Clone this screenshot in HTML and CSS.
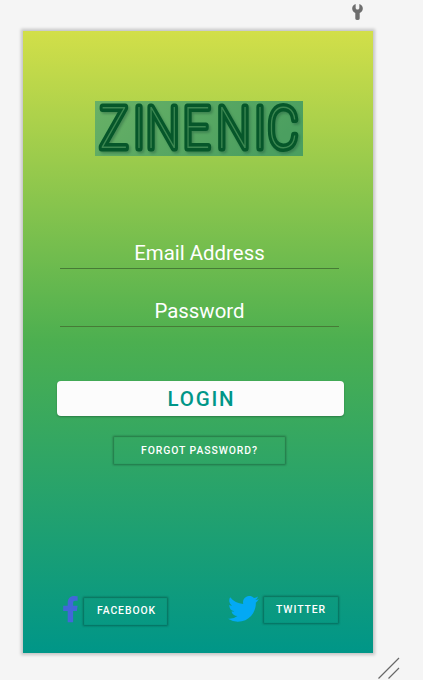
FILE: index.html
```html
<!DOCTYPE html>
<html lang="en">
<head>
<meta charset="utf-8">
<title>Zinenic</title>
<link rel="stylesheet" href="styles.css">
</head>
<body>
<header class="tools">
  <svg class="wrench" viewBox="0 0 12 18"><path d="M4 .3V5L5 6.3H7L8 5V.3C10.4 1 11.8 3 11.8 5.2C11.8 7.4 10.4 9.2 8.4 10V16Q8.4 17.7 6 17.7Q3.6 17.7 3.6 16V10C1.6 9.2.2 7.4.2 5.2C.2 3 1.6 1 4 .3Z"/></svg>
</header>
<main class="screen">
  <svg class="logo" viewBox="0 0 208 55">
    <defs><linearGradient id="panel" x2="1" y2=".3"><stop stop-color="#68b166"/><stop offset="1" stop-color="#4b9f60"/></linearGradient></defs>
    <rect width="208" height="55" fill="url(#panel)"/>
    <text class="letters" transform="scale(.84 1)" x="5.5 45 60.5 104.5 144.5 189 205.5" y="47">ZINENIC</text>
  </svg>
  <form class="login">
    <input class="field" type="text" placeholder="Email Address">
    <input class="field" type="password" placeholder="Password">
    <button class="submit" type="button">LOGIN</button>
    <button class="outline forgot" type="button">FORGOT PASSWORD?</button>
  </form>
  <footer class="social">
    <svg class="facebook-icon" viewBox="0 0 16 28"><path d="M5 28V16H.2V10.6H5V7.5C5 2.8 7.8.2 12 .2C13.4.2 15.6.5 15.6.5V5.3H13.2C11.3 5.3 10.8 6.2 10.8 7.6V10.6H15.6L14.8 16H10.8V28Z"/></svg>
    <button class="outline facebook" type="button">FACEBOOK</button>
    <svg class="twitter-icon" viewBox="0 0 24 20" preserveAspectRatio="none"><path d="M23.95 2.37a10 10 0 0 1-2.82.77A4.95 4.95 0 0 0 23.3.42a9.9 9.9 0 0 1-3.13 1.18 4.92 4.92 0 0 0-8.38 4.48A13.9 13.9 0 0 1 1.64.96a4.93 4.93 0 0 0 1.52 6.57 4.9 4.9 0 0 1-2.23-.61v.06a4.92 4.92 0 0 0 3.95 4.83 5 5 0 0 1-2.21.08 4.94 4.94 0 0 0 4.6 3.42A9.9 9.9 0 0 1 0 17.54a14 14 0 0 0 7.55 2.21c9.14 0 14.3-7.72 13.99-14.63a10 10 0 0 0 2.41-2.75Z"/></svg>
    <button class="outline twitter" type="button">TWITTER</button>
  </footer>
</main>
<svg class="grip" viewBox="0 0 22 22"><path d="M.5 21.5L21 1M10.5 21.5L21 11"/></svg>
</body>
</html>
```
FILE: styles.css
```css
* { box-sizing: border-box; }
body {
  margin: 0;
  height: 680px;
  overflow: hidden;
  background: #f5f5f5;
  font-family: Roboto, sans-serif;
}
.tools {
  height: 31px;
  padding: 3px 60px 0 0;
  display: flex;
  justify-content: flex-end;
}
.wrench { width: 11px; height: 18px; fill: #6e6e6e; }
.screen {
  width: 350px;
  height: 622px;
  margin-left: 23px;
  display: flex;
  flex-direction: column;
  background: linear-gradient(#d2df49, #4caf50 50%, #009688);
  box-shadow: 0 0 3px 2px #0003;
}
.logo {
  width: 208px;
  height: 55px;
  margin: 70px 0 0 72px;
  display: block;
  flex: none;
}
.letters {
  font: 100 57px Roboto, sans-serif;
  fill: #3d8751;
  stroke: #06572a;
  stroke-width: 6.6px;
  stroke-linejoin: round;
  vector-effect: non-scaling-stroke;
  paint-order: stroke;
  filter: drop-shadow(2px 2px 1px #1f553966);
}
.login {
  margin: 80px 29px 0 34px;
  display: flex;
  flex-direction: column;
}
.field {
  width: 279px;
  height: 33px;
  margin: 0 0 25px 3px;
  padding: 2px 0 0;
  border: 0;
  border-bottom: 1px solid #477b36;
  border-radius: 0;
  outline: 0;
  background: transparent;
  font: 400 20.4px Roboto, sans-serif;
  text-align: center;
}
.field::placeholder { color: #fff; opacity: 1; }
.submit {
  height: 35.5px;
  margin-top: 28.5px;
  padding: 1px 0 0 2px;
  border: 0;
  border-radius: 4px;
  background: #fcfcfc;
  box-shadow: 0 1px 2px #0004;
  color: #009688;
  font: 500 20.5px Roboto, sans-serif;
  letter-spacing: 1.8px;
}
.outline {
  border: 0;
  padding: 0 0 1px;
  background: transparent;
  box-shadow: 0 0 2px 1px #00000050, inset 0 0 1px #0004;
  color: #fff;
  font: 500 10.4px Roboto, sans-serif;
  letter-spacing: .93px;
}
.forgot { width: 171px; height: 27px; margin: 21px 0 0 57px; }
.social {
  margin: auto 35px 28px 40px;
  display: flex;
  align-items: flex-start;
}
.facebook-icon { width: 15px; height: 28px; margin-right: 6px; fill: #4267d9; }
.facebook { width: 83px; height: 27px; margin-top: 3px; padding: 0 0 2px 2px; }
.twitter-icon { width: 31px; height: 26px; margin: 1px 5px 0 61px; fill: #03a9f4; }
.twitter { width: 74px; height: 26px; margin-top: 2px; padding-bottom: 2px; }
.grip {
  position: absolute;
  left: 378px;
  top: 657px;
  width: 22px;
  height: 22px;
  fill: none;
  stroke: #686868;
  stroke-width: 1.2px;
}
```
